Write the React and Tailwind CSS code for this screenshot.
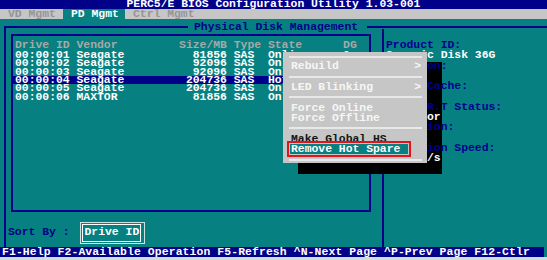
const rows = [
  ['00:00:01', 'Seagate', '81856', 'Online', '0'],
  ['00:00:02', 'Seagate', '92096', 'Online', '0'],
  ['00:00:03', 'Seagate', '92096', 'Online', '0'],
  ['00:00:04', 'Seagate', '204736', 'Hotspare', '-'],
  ['00:00:05', 'Seagate', '204736', 'Online', '1'],
  ['00:00:06', 'MAXTOR', '81856', 'Online', '1'],
];

const info = [
  ['Product ID:', 'l'],
  ['Generic Disk 36G', 'v'],
  ['Revision:', 'l'],
  ['0003', 'v'],
  ['Write Cache:', 'l'],
  ['Enable', 'v'],
  ['S.M.A.R.T Status:', 'l'],
  ['No Error', 'v'],
  [' Location:', 'l'],
  ['Slot 4', 'v'],
  [' Rotation Speed:', 'l'],
  ['3.0 Gb/s', 'v'],
];

function fmt(r) {
  return `${r[0]} ${r[1].padEnd(15)}${r[2].padStart(7)} SAS  ${r[3].padEnd(11)}${r[4]}`;
}

function Sep() {
  return (
    <div className="h-[10.375px] flex items-center">
      <div className="ml-[6px] mr-[5px] flex-1 h-[2px] bg-[#e8e8e8]" />
    </div>
  );
}

export default function App() {
  return (
    <div className="relative w-[547px] h-[260px] overflow-hidden bg-[#068080] font-['Liberation_Mono',monospace] font-bold text-[11.4px] flex flex-col">
      <div className="h-[9px] shrink-0 bg-[#000088] text-white leading-[9px] text-center whitespace-pre overflow-hidden">
        PERC5/E BIOS Configuration Utility 1.03-001
      </div>
      <div className="h-[10px] shrink-0 bg-[#c6c6c6] flex leading-[10px] whitespace-pre">
        <div className="w-[63px] pl-[8px] text-[#959595]">VD Mgmt</div>
        <div className="w-[62px] pl-[8px] bg-[#068080] text-white">PD Mgmt</div>
        <div className="pl-[8px] text-[#959595]">Ctrl Mgmt</div>
      </div>
      <div className="h-[228px] shrink-0 pt-[6px] pl-[4px]">
        <fieldset className="h-[222px] border-t-2 border-l-2 border-[#000088] min-w-0">
          <legend className="ml-[182px] pl-[6px] pr-[9px] leading-[4px] text-[#000088] whitespace-pre">
            Physical Disk Management
          </legend>
          <div className="flex h-[218px]">
            <div className="w-[376px] shrink-0 pt-[5px]">
              <div className="ml-[5px] w-[360px] h-[178px] border-2 border-[#000088] pt-[4px] whitespace-pre">
                <div className="pl-[2px] leading-[11px] h-[11px] text-[#a8a8a8]">
                  {'Drive ID Vendor         Size/MB Type State      DG'}
                </div>
                {rows.map((r, i) => (
                  <div
                    key={i}
                    className={
                      i === 3
                        ? 'pl-[2px] h-[8.33px] leading-[8.33px] bg-[#000088] text-white'
                        : 'pl-[2px] h-[8.33px] leading-[8.33px] text-white'
                    }
                  >
                    {fmt(r)}
                  </div>
                ))}
              </div>
              <div className="mt-[10px] flex items-center h-[22px] pl-[2px] whitespace-pre">
                <span className="text-[#000088]">Sort By :</span>
                <div className="ml-[10px] w-[65px] h-[22px] border border-[#cfe3e3] p-[1px] pr-[3px]">
                  <div className="h-full border border-white flex items-center pl-[2px] text-white">
                    Drive ID
                  </div>
                </div>
              </div>
            </div>
            <div className="flex-1 border-l-2 border-[#000088] pl-[2px] pt-[11px] leading-[10.3px] whitespace-pre">
              {info.map(([t, k], i) => (
                <div
                  key={i}
                  className={
                    k === 'l'
                      ? 'relative z-[2] h-[10.3px] text-[#000090]'
                      : 'relative z-[2] h-[10.3px] text-white'
                  }
                >
                  {t}
                </div>
              ))}
            </div>
          </div>
        </fieldset>
      </div>
      <div className="h-[10px] shrink-0 w-[544px] bg-[#000088] leading-[10px] pl-[2px] text-white whitespace-pre tracking-[0.11px]">
        F1-Help F2-Available Operation F5-Refresh ^N-Next Page ^P-Prev Page F12-Ctlr
      </div>
      <div className="flex-1 bg-[#cfdede]" />

      {/* popup shadow */}
      <div className="absolute left-[298px] top-[62px] w-[144px] h-[112px] bg-black z-[1]" />

      {/* popup menu */}
      <div className="absolute left-[283px] top-[52px] w-[144px] h-[111px] bg-[#c6c6c6] z-[3] overflow-hidden whitespace-pre leading-[10.375px]">
        <div className="h-[9px] flex items-center">
          <div className="ml-[6px] mr-[5px] flex-1 h-[2px] bg-[#e8e8e8]" />
        </div>
        <div className="h-[10.375px] flex justify-between pl-[8px] pr-[6px] text-[#f6f6f6]">
          <span>Rebuild</span>
          <span>&gt;</span>
        </div>
        <Sep />
        <div className="h-[10.375px] flex justify-between pl-[8px] pr-[6px] text-[#f6f6f6]">
          <span>LED Blinking</span>
          <span>&gt;</span>
        </div>
        <Sep />
        <div className="h-[10.375px] pl-[8px] text-[#f6f6f6]">Force Online</div>
        <div className="h-[10.375px] pl-[8px] text-[#f6f6f6]">Force Offline</div>
        <Sep />
        <div className="h-[10.375px] pl-[8px] text-[#141414]">Make Global HS</div>
        <div className="h-[10.375px] flex items-center">
          <div className="ml-[7px] w-[118px] h-[10px] leading-[10px] bg-[#068080] text-white pl-[1px] outline-2 outline-[#e0141c] outline-offset-[1px]">
            Remove Hot Spare
          </div>
        </div>
        <Sep />
      </div>
    </div>
  );
}
